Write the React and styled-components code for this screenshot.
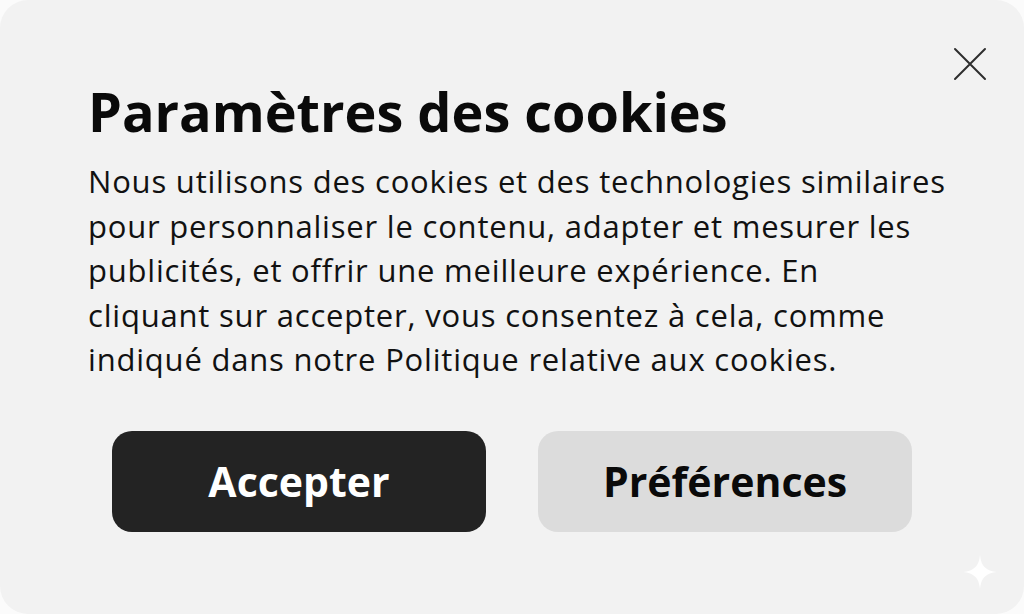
import React from "react";
import styled, { createGlobalStyle } from "styled-components";

const Global = createGlobalStyle`
  html, body { margin: 0; padding: 0; background: #fbfbfb; }
  body { font-family: "Open Sans", "Noto Sans", sans-serif; }
  * { box-sizing: border-box; }
`;

const Card = styled.div`
  position: relative;
  width: 1024px;
  height: 614px;
  background: #f2f2f2;
  border-radius: 28px;
  padding: 76px 40px 0 88px;
  display: flex;
  flex-direction: column;
`;

const Title = styled.h1`
  margin: 0;
  font-size: 54px;
  font-weight: 700;
  line-height: 70px;
  color: #0a0a0a;
  letter-spacing: 0;
`;

const Body = styled.p`
  margin: 13px 0 0;
  font-size: 31px;
  letter-spacing: 0.8px;
  line-height: 44.5px;
  color: #111;
  max-width: 900px;
`;

const Actions = styled.div`
  display: flex;
  justify-content: center;
  gap: 52px;
  margin: 49px 0 0 -48px;
`;

const Button = styled.button`
  width: 374px;
  height: 101px;
  border: none;
  border-radius: 20px;
  font-family: "Open Sans", "Noto Sans", sans-serif;
  font-weight: 700;
  font-size: 41px;
  background: ${(p) => (p.$primary ? "#232323" : "#dcdcdc")};
  color: ${(p) => (p.$primary ? "#ffffff" : "#0a0a0a")};
  cursor: pointer;
`;

const Close = styled.button`
  position: absolute;
  top: 46px;
  right: 36px;
  width: 36px;
  height: 36px;
  padding: 0;
  border: none;
  background: transparent;
  display: flex;
  align-items: center;
  justify-content: center;
`;

const Sparkle = styled.svg`
  position: absolute;
  right: 26px;
  bottom: 24px;
`;

export default function App() {
  return (
    <>
      <Global />
      <Card>
        <Close aria-label="Fermer">
          <svg width="34" height="34" viewBox="0 0 34 34">
            <path d="M2 2 L32 32 M32 2 L2 32" stroke="#2e2e2e" strokeWidth="2" strokeLinecap="round" />
          </svg>
        </Close>
        <Title>Paramètres des cookies</Title>
        <Body>
          Nous utilisons des cookies et des technologies similaires
          <br />
          pour personnaliser le contenu, adapter et mesurer les
          <br />
          publicités, et offrir une meilleure expérience. En
          <br />
          cliquant sur accepter, vous consentez à cela, comme
          <br />
          indiqué dans notre Politique relative aux cookies.
        </Body>
        <Actions>
          <Button $primary>Accepter</Button>
          <Button>Préférences</Button>
        </Actions>
        <Sparkle width="36" height="36" viewBox="0 0 36 36">
          <path d="M18 1 C19 12 24 17 35 18 C24 19 19 24 18 35 C17 24 12 19 1 18 C12 17 17 12 18 1 Z" fill="#ffffff" />
        </Sparkle>
      </Card>
    </>
  );
}
